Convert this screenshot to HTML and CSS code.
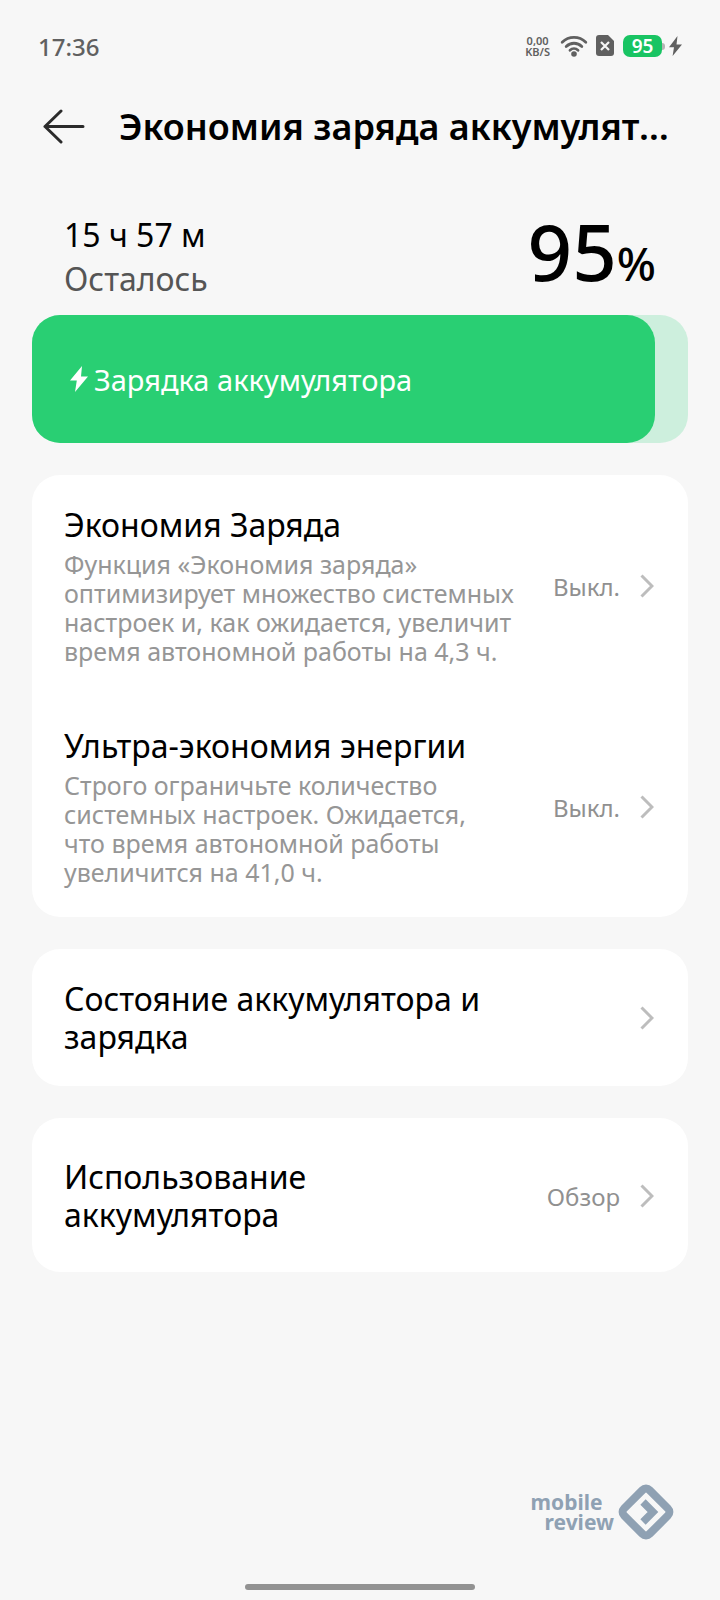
FILE: index.html
```html
<!DOCTYPE html>
<html lang="ru">
<head>
<meta charset="utf-8">
<meta name="viewport" content="width=device-width, initial-scale=1">
<title>Экономия заряда аккумулятора</title>
<link rel="stylesheet" href="styles.css">
</head>
<body>
<div class="screen">
  <header class="status">
    <time class="clock">17:36</time>
    <div class="status-icons">
      <div class="speed"><span>0,00</span><span>KB/S</span></div>
      <svg class="wifi" viewBox="0 0 28 24" fill="none" stroke="#606060" stroke-width="2.8" stroke-linecap="round" aria-hidden="true">
        <path d="M2.200 8.200a17 17 0 0 1 23.600 0M6.200 12.400a11.200 11.200 0 0 1 15.600 0M10 16.200a6 6 0 0 1 8 0"/>
        <circle cx="14" cy="20" r="2.800" fill="#606060" stroke="none"/>
      </svg>
      <svg class="sim" viewBox="0 0 18 22" aria-hidden="true">
        <path d="M3 0h9l6 6v12a3 3 0 0 1-3 3H3a3 3 0 0 1-3-3V3a3 3 0 0 1 3-3z" fill="#606060"/>
        <path d="M5 7l8 8M13 7l-8 8" stroke="#f7f7f7" stroke-width="2.200"/>
      </svg>
      <div class="charge"><span class="charge-level">95</span><span class="charge-tip"></span></div>
      <svg class="status-bolt" viewBox="0 0 13 20" aria-hidden="true"><path d="M8.500 0L0 11.200h5L3.600 20 13 8.500H7.500z" fill="#606060"/></svg>
    </div>
  </header>

  <div class="title-bar">
    <button class="back" type="button" aria-label="Назад">
      <svg viewBox="0 0 42 36" fill="none" stroke="#2b2b2b" stroke-width="3" stroke-linecap="round" stroke-linejoin="round" aria-hidden="true"><path d="M18 2L2 17.500 18 33M2 17.500h38"/></svg>
    </button>
    <h1 class="title">Экономия заряда аккумулятора</h1>
  </div>

  <main class="content">
    <section class="summary">
      <div class="remaining">
        <p class="remaining-time">15 ч 57 м</p>
        <p class="remaining-label">Осталось</p>
      </div>
      <p class="percent">95<span class="percent-sign">%</span></p>
    </section>

    <div class="battery">
      <div class="battery-fill" style="width: 95%">
        <svg class="bolt" viewBox="0 0 18 26" aria-hidden="true"><path d="M12 0L0 14.500h6.800L5 26 18 10.500h-7z" fill="#fff"/></svg>
        <span>Зарядка аккумулятора</span>
      </div>
    </div>

    <section class="card">
      <button class="row" type="button">
        <span class="row-text">
          <span class="row-title">Экономия Заряда</span>
          <span class="row-note">Функция «Экономия заряда» оптимизирует множество системных настроек и, как ожидается, увеличит время автономной работы на 4,3 ч.</span>
        </span>
        <span class="value">Выкл.</span>
        <svg class="chevron" viewBox="0 0 14 24" aria-hidden="true"><path d="M1.500 1.500L12 12 1.500 22.500"/></svg>
      </button>
      <button class="row" type="button">
        <span class="row-text">
          <span class="row-title">Ультра-экономия энергии</span>
          <span class="row-note">Строго ограничьте количество системных настроек. Ожидается, что&nbsp;время автономной работы увеличится на 41,0 ч.</span>
        </span>
        <span class="value">Выкл.</span>
        <svg class="chevron" viewBox="0 0 14 24" aria-hidden="true"><path d="M1.500 1.500L12 12 1.500 22.500"/></svg>
      </button>
    </section>

    <section class="card">
      <button class="row" type="button">
        <span class="row-text"><span class="row-title">Состояние аккумулятора и зарядка</span></span>
        <svg class="chevron" viewBox="0 0 14 24" aria-hidden="true"><path d="M1.500 1.500L12 12 1.500 22.500"/></svg>
      </button>
    </section>

    <section class="card">
      <button class="row row-tall" type="button">
        <span class="row-text"><span class="row-title">Использование аккумулятора</span></span>
        <span class="value">Обзор</span>
        <svg class="chevron" viewBox="0 0 14 24" aria-hidden="true"><path d="M1.500 1.500L12 12 1.500 22.500"/></svg>
      </button>
    </section>
  </main>

  <footer class="footer">
    <div class="brand">
      <div class="brand-name"><span>mobile</span><span class="brand-second">review</span></div>
      <svg class="brand-mark" viewBox="0 0 56 56" fill="none" stroke="#8fa1b3" aria-hidden="true">
        <rect x="10" y="10" width="36" height="36" rx="5" stroke-width="8" transform="rotate(45 28 28)"/>
        <path d="M25 18l10 10-10 10" stroke-width="7.500"/>
      </svg>
    </div>
    <div class="home-bar"></div>
  </footer>
</div>
</body>
</html>
```
FILE: styles.css
```css
* { box-sizing: border-box; }
body {
  margin: 0;
  background: #f7f7f7;
  color: #000;
  font-family: "Noto Sans", "Open Sans", sans-serif;
}
p, h1 { margin: 0; font-weight: 400; }
svg { display: block; flex: none; }
button {
  border: 0;
  padding: 0;
  background: none;
  color: inherit;
  font: inherit;
  text-align: left;
}
.screen { display: flex; flex-direction: column; min-height: 100vh; }

.status {
  display: flex;
  align-items: center;
  justify-content: space-between;
  height: 92px;
  padding: 0 38px;
  color: #606060;
}
.clock { font-size: 24px; font-weight: 500; }
.status-icons { display: flex; align-items: center; }
.speed {
  display: flex;
  flex-direction: column;
  align-items: center;
  margin-right: 10px;
  font-size: 11px;
  line-height: 11px;
  font-weight: 600;
}
.wifi { width: 28px; height: 24px; margin-right: 8px; }
.sim { width: 18px; height: 22px; margin-right: 9px; }
.charge { display: flex; align-items: center; margin-right: 4px; }
.charge-level {
  width: 39px;
  border-radius: 7px;
  background: #19c463;
  color: #fff;
  font-size: 19px;
  line-height: 22px;
  font-weight: 600;
  text-align: center;
}
.charge-tip { width: 3px; height: 7px; border-radius: 0 3px 3px 0; background: #b4b4b4; }
.status-bolt { width: 13px; height: 20px; }

.title-bar { display: flex; align-items: center; gap: 34px; height: 70px; padding: 0 44px 0 43px; }
.back { flex: none; }
.back svg { width: 42px; height: 36px; }
.title {
  flex: 1;
  min-width: 0;
  overflow: hidden;
  font-size: 36px;
  line-height: 50px;
  font-weight: 600;
  white-space: nowrap;
  text-overflow: ellipsis;
}

.content { padding: 51px 32px 0; }
.summary {
  display: flex;
  justify-content: space-between;
  height: 102px;
  padding: 0 32px;
}
.remaining { font-size: 32px; line-height: 44px; }
.remaining-label { color: #555; }
.percent { font-size: 78px; line-height: 76px; font-weight: 500; }
.percent-sign { font-size: 46px; }

.battery { height: 128px; border-radius: 28px; background: #cdefdd; }
.battery-fill {
  display: flex;
  align-items: center;
  gap: 6px;
  height: 100%;
  padding: 0 38px;
  border-radius: 28px;
  background: #29cf73;
  color: #fff;
  font-size: 29px;
}
.bolt { width: 18px; height: 26px; }

.card { margin-top: 32px; border-radius: 28px; background: #fff; }
.row { display: flex; align-items: center; width: 100%; padding: 31px 34px 30px 32px; }
.row-tall { padding: 40px 34px 38px 32px; }
.row-text { flex: 1; padding-right: 34px; }
.row-title { display: block; font-size: 32px; line-height: 38px; }
.row-note { display: block; margin-top: 6px; color: #969696; font-size: 25px; line-height: 29px; }
.value { margin-right: 20px; color: #909090; font-size: 24px; line-height: 29px; }
.chevron { width: 14px; height: 24px; fill: none; stroke: #bdbdbd; stroke-width: 3; }

.footer { display: flex; flex-direction: column; gap: 44px; margin-top: auto; padding-bottom: 10px; }
.brand { display: flex; align-items: center; justify-content: flex-end; gap: 4px; padding-right: 46px; }
.brand-name {
  display: flex;
  flex-direction: column;
  color: #8fa1b3;
  font-size: 21px;
  line-height: 20px;
  font-weight: 700;
}
.brand-second { padding-left: 14px; }
.brand-mark { width: 56px; height: 56px; }
.home-bar { align-self: center; width: 32%; height: 6px; border-radius: 3px; background: #929292; }
```
